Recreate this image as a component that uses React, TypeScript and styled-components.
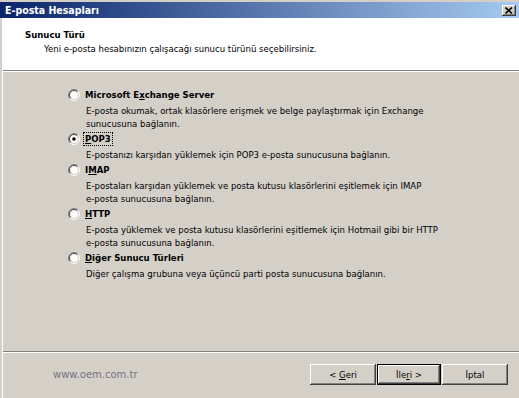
import styled, { createGlobalStyle } from "styled-components";

const Global = createGlobalStyle`
  html, body {
    margin: 0;
    padding: 0;
    background: #d4d0c8;
  }
  body {
    font-family: "DejaVu Sans Condensed", "DejaVu Sans", Verdana, sans-serif;
    font-stretch: condensed;
    font-size: 9.5px;
    color: #000;
  }
`;

const Window = styled.div`
  width: 519px;
  height: 398px;
  display: flex;
  flex-direction: column;
  background: #d4d0c8;
  padding-top: 2px;
  box-sizing: border-box;
  overflow: hidden;
`;

const TitleBar = styled.div`
  height: 16px;
  flex: none;
  display: flex;
  align-items: center;
  justify-content: space-between;
  padding: 0 3px 0 5px;
  background: linear-gradient(to right, #0a246a, #a6caf0);
  color: #fff;
  font-weight: bold;
  font-size: 10.5px;
`;

const CloseButton = styled.div`
  width: 14px;
  height: 11px;
  display: flex;
  align-items: center;
  justify-content: center;
  background: #d4d0c8;
  box-shadow: inset -1px -1px #404040, inset 1px 1px #fff, inset -2px -2px #808080;
`;

const Frame = styled.div`
  flex: 1;
  display: flex;
  flex-direction: column;
  margin: 0 0 0 2px;
  border-left: 1px solid #fff;
`;

const Header = styled.div`
  height: 53px;
  flex: none;
  background: #fff;
  border-bottom: 1px solid #808080;
  box-shadow: 0 1px #fff;
  padding: 10px 0 0 22px;
  box-sizing: border-box;
`;

const HeaderTitle = styled.div`
  font-weight: bold;
  line-height: 13px;
`;

const HeaderText = styled.div`
  line-height: 13px;
  padding: 1px 0 0 19px;
`;

const Body = styled.div`
  flex: 1;
  display: flex;
  flex-direction: column;
  gap: 1px;
  padding: 16px 0 0 65px;
`;

const Option = styled.div`
  display: flex;
  flex-direction: column;
`;

const OptionRow = styled.label`
  height: 16px;
  display: flex;
  align-items: center;
  gap: 4px;
  font-weight: bold;
`;

const OptionLabel = styled.span<{ $focus?: boolean }>`
  padding: 0 1px;
  outline: ${(p) => (p.$focus ? "1px dotted #000" : "none")};
  line-height: 12px;
`;

const Desc = styled.div`
  padding-left: 18px;
  line-height: 13px;
  white-space: nowrap;
  &:nth-child(2) {
    margin-top: 1px;
  }
`;

const Footer = styled.div`
  height: 44px;
  flex: none;
  border-top: 1px solid #808080;
  box-shadow: inset 0 1px #fff;
  display: flex;
  align-items: center;
  padding: 0 11px 2px 50px;
`;

const Brand = styled.div`
  flex: 1;
  color: #78727e;
  font-family: "DejaVu Sans", Verdana, sans-serif;
  font-stretch: normal;
  font-size: 10px;
`;

const Button = styled.button<{ $default?: boolean }>`
  width: ${(p) => (p.$default ? "64px" : "66px")};
  height: 21px;
  flex: none;
  font-family: inherit;
  font-stretch: condensed;
  font-size: 9.5px;
  color: #000;
  background: #d4d0c8;
  border: ${(p) => (p.$default ? "1px solid #000" : "none")};
  box-shadow: inset -1px -1px #404040, inset 1px 1px #fff, inset -2px -2px #808080;
  padding: 0;
  & + & {
    margin-left: ${(p) => (p.$default ? "1px" : "15px")};
  }
`;

function Radio({ checked }: { checked?: boolean }) {
  return (
    <svg width="12" height="12" viewBox="0 0 12 12">
      <circle cx="6" cy="6" r="4.5" fill="#fff" />
      <path d="M2.1 9.9 A5.5 5.5 0 0 1 9.9 2.1" fill="none" stroke="#808080" />
      <path d="M9.9 2.1 A5.5 5.5 0 0 1 2.1 9.9" fill="none" stroke="#fff" />
      <path d="M2.8 9.2 A4.5 4.5 0 0 1 9.2 2.8" fill="none" stroke="#404040" />
      <path d="M9.2 2.8 A4.5 4.5 0 0 1 2.8 9.2" fill="none" stroke="#d4d0c8" />
      {checked && <circle cx="6" cy="6" r="1.8" fill="#000" />}
    </svg>
  );
}

const options = [
  {
    label: (
      <>
        Microsoft E<u>x</u>change Server
      </>
    ),
    lines: [
      "E-posta okumak, ortak klasörlere erişmek ve belge paylaştırmak için Exchange",
      "sunucusuna bağlanın.",
    ],
  },
  {
    label: (
      <>
        <u>P</u>OP3
      </>
    ),
    checked: true,
    lines: ["E-postanızı karşıdan yüklemek için POP3 e-posta sunucusuna bağlanın."],
  },
  {
    label: (
      <>
        I<u>M</u>AP
      </>
    ),
    lines: [
      "E-postaları karşıdan yüklemek ve posta kutusu klasörlerini eşitlemek için IMAP",
      "e-posta sunucusuna bağlanın.",
    ],
  },
  {
    label: (
      <>
        <u>H</u>TTP
      </>
    ),
    lines: [
      "E-posta yüklemek ve posta kutusu klasörlerini eşitlemek için Hotmail gibi bir HTTP",
      "e-posta sunucusuna bağlanın.",
    ],
  },
  {
    label: (
      <>
        <u>D</u>iğer Sunucu Türleri
      </>
    ),
    lines: ["Diğer çalışma grubuna veya üçüncü parti posta sunucusuna bağlanın."],
  },
];

export default function App() {
  return (
    <Window>
      <Global />
      <TitleBar>
        <span>E-posta Hesapları</span>
        <CloseButton>
          <svg width="8" height="7" viewBox="0 0 8 7">
            <path d="M0.5 0.5 L7 6.5 M7 0.5 L0.5 6.5" stroke="#000" strokeWidth="1.6" />
          </svg>
        </CloseButton>
      </TitleBar>
      <Frame>
        <Header>
          <HeaderTitle>Sunucu Türü</HeaderTitle>
          <HeaderText>Yeni e-posta hesabınızın çalışacağı sunucu türünü seçebilirsiniz.</HeaderText>
        </Header>
        <Body>
          {options.map((o, i) => (
            <Option key={i}>
              <OptionRow>
                <Radio checked={o.checked} />
                <OptionLabel $focus={o.checked}>{o.label}</OptionLabel>
              </OptionRow>
              {o.lines.map((l) => (
                <Desc key={l}>{l}</Desc>
              ))}
            </Option>
          ))}
        </Body>
        <Footer>
          <Brand>www.oem.com.tr</Brand>
          <Button>
            &lt; <u>G</u>eri
          </Button>
          <Button $default>
            İle<u>r</u>i &gt;
          </Button>
          <Button>İptal</Button>
        </Footer>
      </Frame>
    </Window>
  );
}
